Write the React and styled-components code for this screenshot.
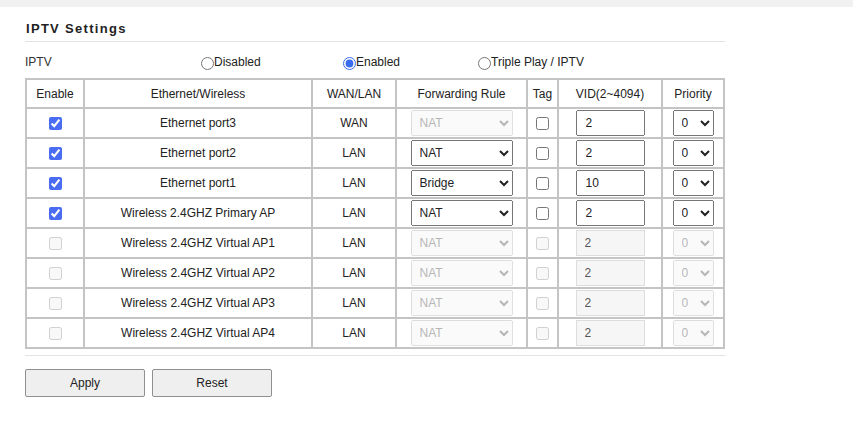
import React from 'react';
import styled, { createGlobalStyle } from 'styled-components';

const GlobalStyle = createGlobalStyle`
    body {
        margin: 0;
        background: #fff;
        font-family: "Liberation Sans", Arial, sans-serif;
        font-size: 12px;
        color: #333;
    }
`;

const TopStrip = styled.div`
    height: 7px;
    background: #f1f1f1;
`;

const Page = styled.div`
    width: 700px;
    padding: 14px 0 0 25px;
`;

const Title = styled.h2`
    margin: 0;
    padding: 0 0 5px 1px;
    font-size: 13px;
    line-height: 15px;
    font-weight: bold;
    letter-spacing: 1.3px;
    color: #222;
    border-bottom: 1px solid #e3e3e3;
`;

const ModeRow = styled.div`
    display: grid;
    grid-template-columns: 173px 142px 135px 1fr;
    align-items: center;
    height: 28px;
    margin-top: 6px;
`;

const RadioLabel = styled.label`
    display: flex;
    align-items: center;
    color: #222;

    input {
        margin: 2px 0 0 3px;
        width: 13px;
        height: 13px;
        accent-color: #3a6cf0;
    }
`;

const Grid = styled.table`
    width: 698px;
    table-layout: fixed;
    border-collapse: collapse;
    margin-top: 2px;
    border: 2px solid #c4c4c4;
`;

const HeadCell = styled.th`
    height: 27px;
    padding: 0;
    border: 2px solid #c4c4c4;
    font-weight: normal;
    color: #222;
`;

const Cell = styled.td`
    height: 28px;
    border: 2px solid #c4c4c4;
    text-align: center;
    color: #222;
    padding: 0;
`;

const Check = styled.input.attrs({ type: 'checkbox' })`
    margin: 0;
    width: 13px;
    height: 13px;
    vertical-align: middle;
    accent-color: #4a6cf3;
`;

const Select = styled.select`
    width: ${({ w }) => w}px;
    height: 26px;
    font-family: "Liberation Sans", Arial, sans-serif;
    font-size: 12px;
    padding: 0 4px;
    color: #222;
    vertical-align: middle;

    &:disabled {
        color: #999;
    }
`;

const VidInput = styled.input`
    width: 69px;
    height: 26px;
    box-sizing: border-box;
    font-family: "Liberation Sans", Arial, sans-serif;
    font-size: 12px;
    padding: 0 8px;
    color: #222;
    vertical-align: middle;

    &:disabled {
        color: #555;
        background: #f6f6f6;
        border: 1px solid #ddd;
    }
`;

const Divider = styled.div`
    margin-top: 6px;
    border-top: 1px solid #e3e3e3;
`;

const Actions = styled.div`
    display: flex;
    gap: 7px;
    margin-top: 13px;
`;

const Button = styled.button`
    width: 120px;
    height: 28px;
    background: #efefef;
    border: 1px solid #8f8f8f;
    border-radius: 2px;
    font-family: "Liberation Sans", Arial, sans-serif;
    font-size: 12px;
    color: #222;
`;

const columns = [
    { label: 'Enable', w: 58 },
    { label: 'Ethernet/Wireless', w: 228 },
    { label: 'WAN/LAN', w: 84 },
    { label: 'Forwarding Rule', w: 131 },
    { label: 'Tag', w: 31 },
    { label: 'VID(2~4094)', w: 104 },
    { label: 'Priority', w: 62 },
];

const ports = [
    { name: 'Ethernet port3', mode: 'WAN', on: true, rule: 'NAT', lockRule: true, vid: '2' },
    { name: 'Ethernet port2', mode: 'LAN', on: true, rule: 'NAT', vid: '2' },
    { name: 'Ethernet port1', mode: 'LAN', on: true, rule: 'Bridge', vid: '10' },
    { name: 'Wireless 2.4GHZ Primary AP', mode: 'LAN', on: true, rule: 'NAT', vid: '2' },
    { name: 'Wireless 2.4GHZ Virtual AP1', mode: 'LAN', on: false, rule: 'NAT', vid: '2' },
    { name: 'Wireless 2.4GHZ Virtual AP2', mode: 'LAN', on: false, rule: 'NAT', vid: '2' },
    { name: 'Wireless 2.4GHZ Virtual AP3', mode: 'LAN', on: false, rule: 'NAT', vid: '2' },
    { name: 'Wireless 2.4GHZ Virtual AP4', mode: 'LAN', on: false, rule: 'NAT', vid: '2' },
];

const App = () => {
    return (
        <>
            <GlobalStyle />
            <TopStrip />
            <Page>
                <Title>IPTV Settings</Title>
                <ModeRow>
                    <span>IPTV</span>
                    <RadioLabel>
                        <input type="radio" name="iptv" />
                        Disabled
                    </RadioLabel>
                    <RadioLabel>
                        <input type="radio" name="iptv" defaultChecked />
                        Enabled
                    </RadioLabel>
                    <RadioLabel>
                        <input type="radio" name="iptv" />
                        Triple Play / IPTV
                    </RadioLabel>
                </ModeRow>
                <Grid>
                    <colgroup>
                        {columns.map((c) => (
                            <col key={c.label} style={{ width: c.w }} />
                        ))}
                    </colgroup>
                    <thead>
                        <tr>
                            {columns.map((c) => (
                                <HeadCell key={c.label}>{c.label}</HeadCell>
                            ))}
                        </tr>
                    </thead>
                    <tbody>
                        {ports.map((p) => (
                            <tr key={p.name}>
                                <Cell>
                                    <Check defaultChecked={p.on} disabled={!p.on} />
                                </Cell>
                                <Cell>{p.name}</Cell>
                                <Cell>{p.mode}</Cell>
                                <Cell>
                                    <Select w={102} defaultValue={p.rule} disabled={!p.on || p.lockRule}>
                                        <option>NAT</option>
                                        <option>Bridge</option>
                                    </Select>
                                </Cell>
                                <Cell>
                                    <Check disabled={!p.on} />
                                </Cell>
                                <Cell>
                                    <VidInput type="text" defaultValue={p.vid} disabled={!p.on} />
                                </Cell>
                                <Cell>
                                    <Select w={41} defaultValue="0" disabled={!p.on}>
                                        {[0, 1, 2, 3, 4, 5, 6, 7].map((n) => (
                                            <option key={n}>{n}</option>
                                        ))}
                                    </Select>
                                </Cell>
                            </tr>
                        ))}
                    </tbody>
                </Grid>
                <Divider />
                <Actions>
                    <Button>Apply</Button>
                    <Button>Reset</Button>
                </Actions>
            </Page>
        </>
    );
};

export default App;
